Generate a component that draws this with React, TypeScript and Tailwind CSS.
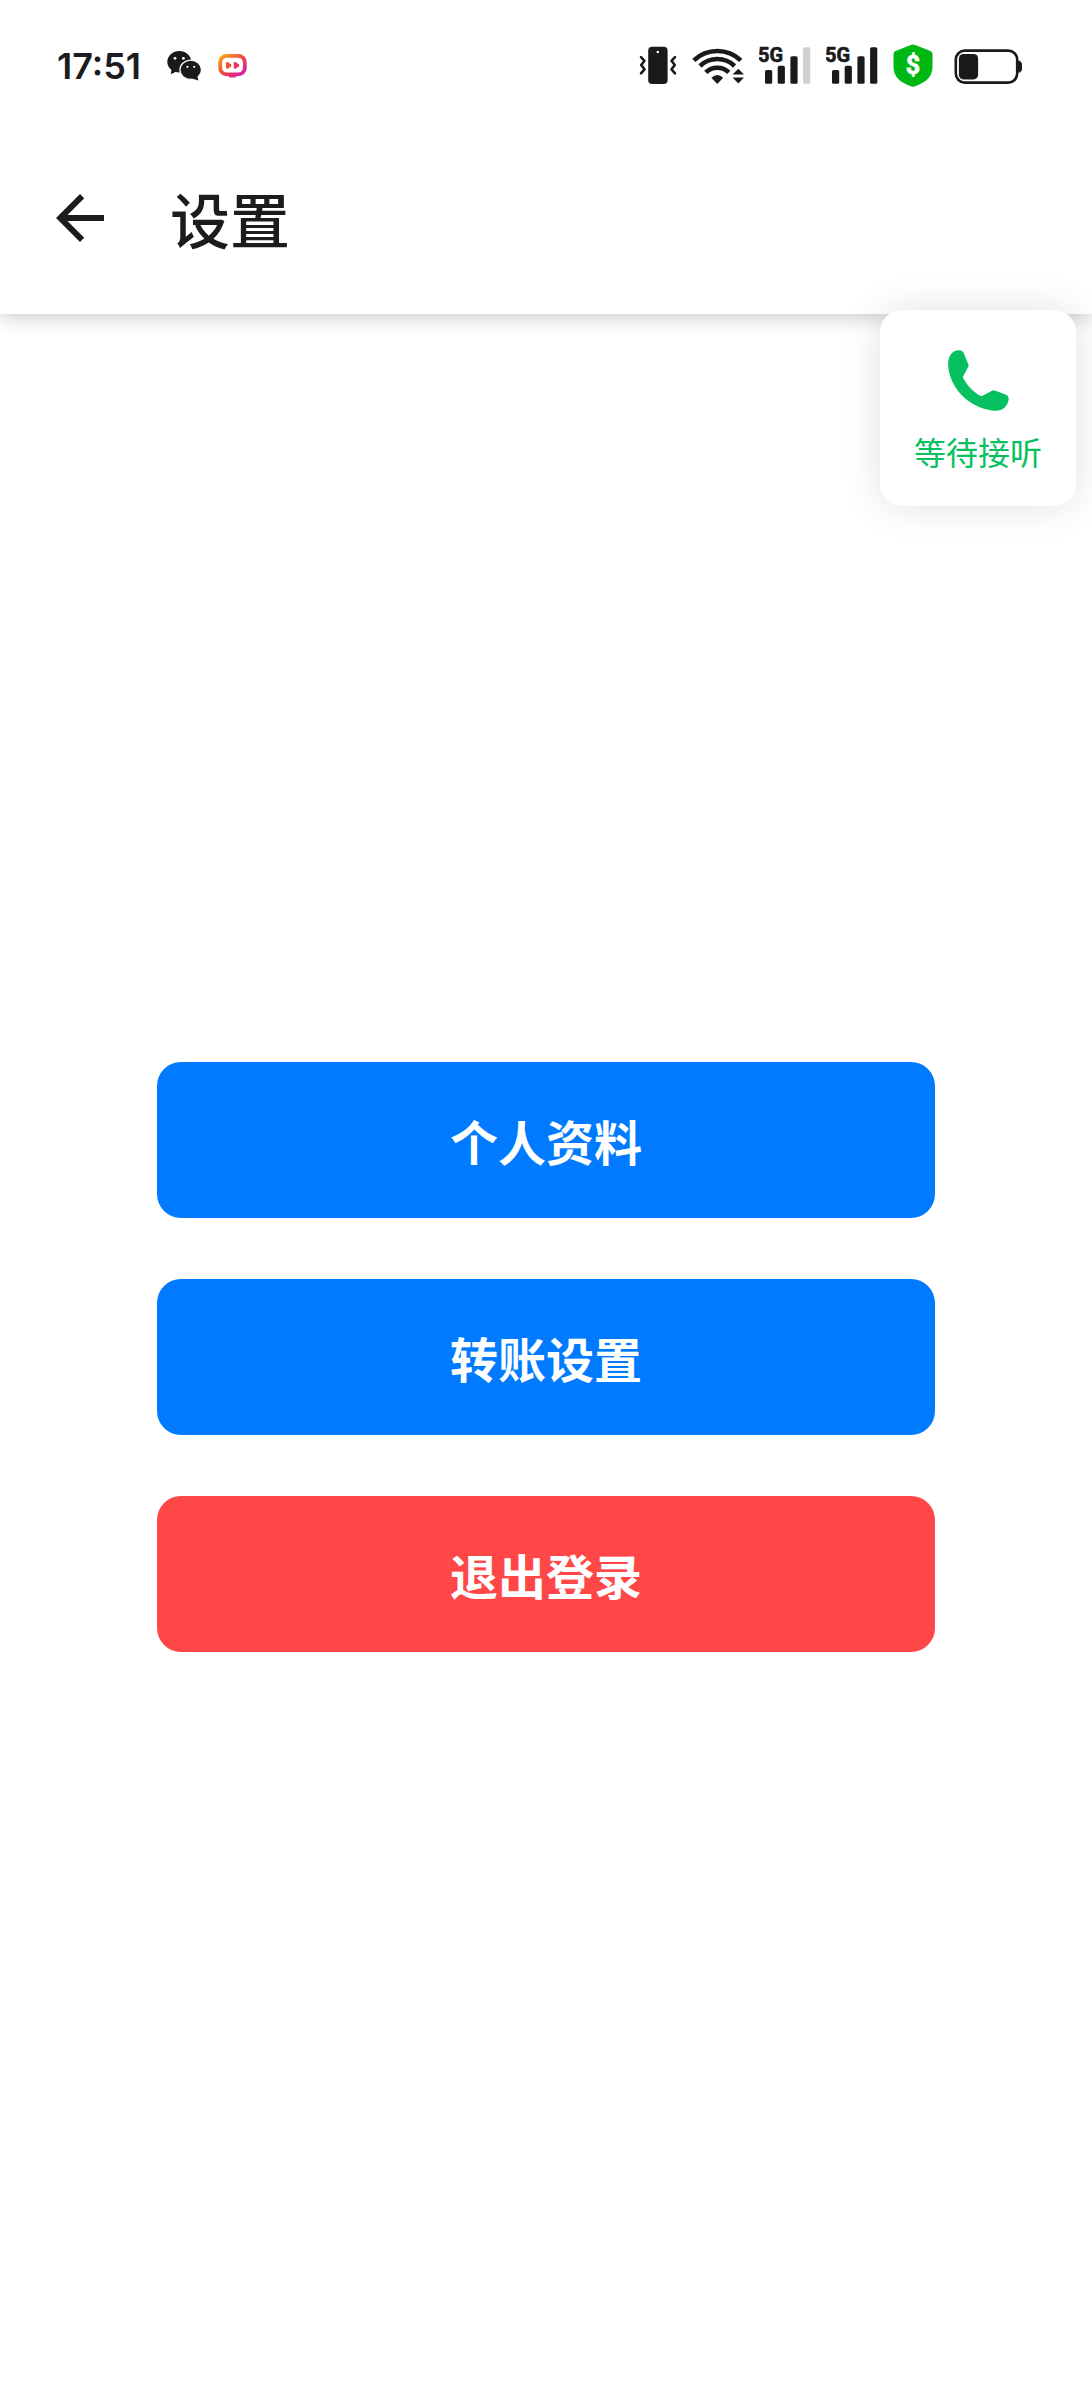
import clsx from "clsx";

const actions = [
  { label: "个人资料", danger: false },
  { label: "转账设置", danger: false },
  { label: "退出登录", danger: true },
];

function WechatIcon() {
  return (
    <svg viewBox="0 0 35 44" className="h-11 w-[35px]" aria-hidden="true">
      <g fill="#1a1a1a">
        <ellipse cx="12.3" cy="17.8" rx="12" ry="10.7" />
        <path d="M4.5 25 3.8 30.2 9.5 27.6Z" />
        <ellipse cx="23.7" cy="25.8" rx="10.8" ry="9.6" stroke="#fff" strokeWidth="1.2" />
        <path d="M25 34.4 31.4 36.4 30 31.5Z" />
      </g>
      <g fill="#fff">
        <circle cx="8" cy="14.3" r="1.4" />
        <circle cx="16.4" cy="14.3" r="1.4" />
        <circle cx="20.4" cy="22.8" r="1.1" />
        <circle cx="27.2" cy="22.8" r="1.1" />
      </g>
    </svg>
  );
}

function VideoAppIcon() {
  return (
    <svg viewBox="0 0 29 44" className="h-11 w-[29px]" aria-hidden="true">
      <defs>
        <linearGradient id="video-app" x1="0" y1="0" x2="1" y2="1">
          <stop offset="0" stopColor="#fba81c" />
          <stop offset="0.5" stopColor="#f0463c" />
          <stop offset="1" stopColor="#d41cb4" />
        </linearGradient>
      </defs>
      <rect x="2.2" y="11.8" width="24.6" height="18.6" rx="6.5" fill="none" stroke="url(#video-app)" strokeWidth="3.8" />
      <path d="M10.5 31.5H18.5L17.5 33.4H11.5Z" fill="#e0307a" />
      <path d="M8 18.4C9.4 17.4 10.8 18.2 11 19.2C12.6 19.2 13.6 20.2 13.4 21.3C13.6 22.4 12.6 23.4 11 23.4C10.8 24.4 9.4 25.2 8 24.2Z" fill="#ee5334" />
      <path d="M15.8 18.4C17.2 17.4 18.6 18.2 18.8 19.2C20.4 19.2 21.4 20.2 21.2 21.3C21.4 22.4 20.4 23.4 18.8 23.4C18.6 24.4 17.2 25.2 15.8 24.2Z" fill="#e83563" />
    </svg>
  );
}

function VibrateIcon() {
  return (
    <svg viewBox="0 0 38 44" className="h-11 w-[38px]" aria-hidden="true">
      <rect x="9.2" y="2.8" width="19.4" height="37.2" rx="4" fill="#1a1a1a" />
      <circle cx="18.8" cy="8" r="1.3" fill="#fff" />
      <g fill="none" stroke="#1a1a1a" strokeWidth="2.6" strokeLinejoin="round" strokeLinecap="round">
        <path d="M2 13.2 5.5 16.8 2.2 21 5.5 25.3 2 29.3" />
        <path d="M36 13.2 32.5 16.8 35.8 21 32.5 25.3 36 29.3" />
      </g>
    </svg>
  );
}

function WifiIcon() {
  return (
    <svg viewBox="0 0 52 44" className="h-11 w-[52px]" aria-hidden="true">
      <g fill="none" stroke="#1a1a1a" strokeWidth="4.6">
        <path d="M1.8 16.4A34 34 0 0 1 48.8 16.4" />
        <path d="M8 22A25 25 0 0 1 42.6 22" />
        <path d="M13.8 28.4A16.4 16.4 0 0 1 36.8 28.4" />
      </g>
      <g fill="#1a1a1a">
        <path d="M19.4 33.8Q25.3 28 31.2 33.8L25.3 40Z" />
        <path d="M40.6 30.6 46.3 24.7 52 30.6Z" />
        <path d="M40.6 33.4H52L46.3 39.4Z" />
      </g>
    </svg>
  );
}

function SignalIcon({ bars }: { bars: number }) {
  const tops = [26, 21.8, 12.3, 3.3];
  return (
    <svg viewBox="0 0 52 44" className="h-11 w-[52px]" aria-hidden="true">
      {tops.map((top, i) => (
        <rect
          key={top}
          x={6 + i * 12.7}
          y={top}
          width="7.2"
          height={39.8 - top}
          rx="1.6"
          fill={i < bars ? "#1a1a1a" : "#cfcfcf"}
        />
      ))}
      <text
        x="-1"
        y="18"
        fontSize="20"
        fontWeight="700"
        fill="#1a1a1a"
        stroke="#1a1a1a"
        strokeWidth="0.6"
        className="font-[Roboto,sans-serif]"
      >
        5G
      </text>
    </svg>
  );
}

function ShieldIcon() {
  return (
    <svg viewBox="0 0 40 44" className="h-11 w-10" aria-hidden="true">
      <path
        d="M18.5 .8Q20 0 21.5 .8L37.5 7Q39.5 8 39.5 10V23C39.5 33 32 39 21.5 42.4Q20 42.9 18.5 42.4C8 39 .5 33 .5 23V10Q.5 8 2.5 7Z"
        fill="#00b814"
      />
      <text
        x="20"
        y="30"
        textAnchor="middle"
        fontSize="25"
        fontWeight="700"
        fill="#fff"
        stroke="#fff"
        strokeWidth="0.7"
        className="font-[Roboto,sans-serif]"
      >
        $
      </text>
    </svg>
  );
}

function BatteryIcon() {
  return (
    <svg viewBox="0 0 69 44" className="h-11 w-[69px]" aria-hidden="true">
      <rect x="1.8" y="6.6" width="61.4" height="32" rx="9" fill="none" stroke="#1a1a1a" strokeWidth="2.6" />
      <path d="M64 16.8H65.6Q66.4 16.8 66.6 18Q68 18.6 68 20V25.6Q68 27 66.6 27.6Q66.4 28.6 65.6 28.6H64Z" fill="#1a1a1a" />
      <rect x="4.9" y="10" width="19.2" height="25.4" rx="4.5" fill="#1a1a1a" />
    </svg>
  );
}

function StatusBar() {
  return (
    <div className="flex h-[132px] items-center justify-between pr-[69px] pl-[57px]">
      <div className="flex items-center">
        <span className="font-[Inter,sans-serif] text-[36px] leading-none font-semibold">17:51</span>
        <div className="ml-[26px] flex items-center gap-4">
          <WechatIcon />
          <VideoAppIcon />
        </div>
      </div>
      <div className="flex items-center gap-[15px]">
        <VibrateIcon />
        <WifiIcon />
        <SignalIcon bars={3} />
        <SignalIcon bars={4} />
        <ShieldIcon />
        <div className="pl-1.5">
          <BatteryIcon />
        </div>
      </div>
    </div>
  );
}

function CallBubble() {
  return (
    <button
      type="button"
      className="absolute top-[310px] right-4 z-20 flex size-[196px] flex-col items-center rounded-[22px] bg-white pt-10 text-[#07c160] shadow-[0_0_40px_rgba(0,0,0,0.12)]"
    >
      <svg viewBox="0 0 61 61" className="size-[61px]" aria-hidden="true">
        <path
          d="M5.5 1.8C8.5 0 12 -.2 14 1Q15.2 1.8 15.8 3.2L20.4 14.6Q20.8 15.8 20.2 17L14.8 27C17.5 34 26.5 43.5 33.5 46.3L44.5 40.6Q45.6 40.1 46.8 40.5L58 44.8Q60.6 45.9 60.7 48.5C60.8 51 59.5 55 56.5 57.8C53.5 60.4 49 61.2 43.5 60.4C20.5 57 3 39 .3 17.5C-.5 9.5 1.8 4.2 5.5 1.8Z"
          fill="currentColor"
        />
      </svg>
      <span className="mt-4 text-[32px] leading-[48px]">等待接听</span>
    </button>
  );
}

export default function App() {
  return (
    <div className="relative flex min-h-screen flex-col bg-white font-['Noto_Sans_CJK_SC',sans-serif] text-[#1c1c1e]">
      <header className="relative z-10 bg-white pb-2.5 shadow-[0_4px_18px_rgba(0,0,0,0.2)]">
        <StatusBar />
        <div className="flex h-[172px] items-center gap-[54px] px-11">
          <button type="button" aria-label="返回">
            <svg viewBox="0 0 24 24" className="size-[72px]" fill="currentColor" aria-hidden="true">
              <path d="M20 11H7.83l5.59-5.59L12 4l-8 8 8 8 1.41-1.41L7.83 13H20v-2z" />
            </svg>
          </button>
          <h1 className="text-[60px] leading-[80px] font-medium">设置</h1>
        </div>
      </header>

      <CallBubble />

      <main className="flex flex-1 flex-col justify-center gap-[61px] px-[157px]">
        {actions.map((action) => (
          <button
            key={action.label}
            type="button"
            className={clsx(
              "h-[156px] w-full rounded-3xl text-[48px] font-bold text-white",
              action.danger ? "bg-[#ff4747]" : "bg-[#007bff]"
            )}
          >
            {action.label}
          </button>
        ))}
      </main>
    </div>
  );
}
